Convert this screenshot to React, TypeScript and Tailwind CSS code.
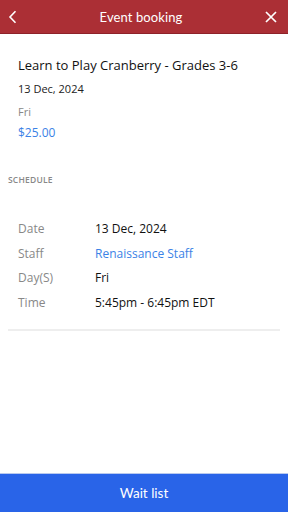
import React from "react";

const rows: { label: string; value: string; link?: boolean }[] = [
  { label: "Date", value: "13 Dec, 2024" },
  { label: "Staff", value: "Renaissance Staff", link: true },
  { label: "Day(S)", value: "Fri" },
  { label: "Time", value: "5:45pm - 6:45pm EDT" },
];

const App: React.FC = () => {
  return (
    <div className="w-[288px] h-[512px] flex flex-col bg-white font-['Open_Sans',sans-serif]">
      {/* Header */}
      <header className="h-[34px] shrink-0 flex items-center justify-between px-[7px] bg-[#ab2f35] border-b border-[#8e2229] text-white">
        <svg width="9" height="14" viewBox="0 0 9 14" fill="none" className="ml-[1px]">
          <path d="M7.5 1.2L2 7l5.5 5.8" stroke="white" strokeWidth="1.6" />
        </svg>
        <h1 className="text-[13px] leading-[18px] pt-[1px] font-['Lato',sans-serif] tracking-[0.1px]">Event booking</h1>
        <svg width="12" height="12" viewBox="0 0 12 12" fill="none" className="mr-[4px]">
          <path d="M1 1l10 10M11 1L1 11" stroke="white" strokeWidth="1.7" />
        </svg>
      </header>

      {/* Event info */}
      <div className="px-[18px] pt-[21px]">
        <h2 className="text-[13px] leading-[20px] text-[#111]">Learn to Play Cranberry - Grades 3-6</h2>
        <p className="mt-[7px] text-[11px] leading-[14px] text-[#222]">13 Dec, 2024</p>
        <p className="mt-[9px] text-[11px] leading-[14px] text-[#888]">Fri</p>
        <p className="mt-[7px] text-[12px] leading-[14px] text-[#3b82e6]">$25.00</p>
      </div>

      <p className="mt-[34px] px-[8px] text-[8.5px] leading-[12px] font-semibold text-[#888] tracking-[0.2px]">
        SCHEDULE
      </p>

      {/* Schedule */}
      <div className="mt-[34px] px-[18px] flex flex-col gap-[7.5px]">
        {rows.map((r) => (
          <div key={r.label} className="flex text-[12px] leading-[17px]">
            <span className="w-[77px] text-[#888]">{r.label}</span>
            <span className={r.link ? "text-[#3b82e6]" : "text-[#111]"}>{r.value}</span>
          </div>
        ))}
      </div>

      <div className="mt-[18px] mx-[8px] h-[2px] bg-[#eeeeee]" />

      <div className="flex-1" />

      {/* Footer button */}
      <button className="h-[39px] shrink-0 w-full bg-[#2964e8] border-t border-[#b9c9ee] text-white text-[13.5px] font-['Lato',sans-serif]">
        Wait list
      </button>
    </div>
  );
};

export default App;
